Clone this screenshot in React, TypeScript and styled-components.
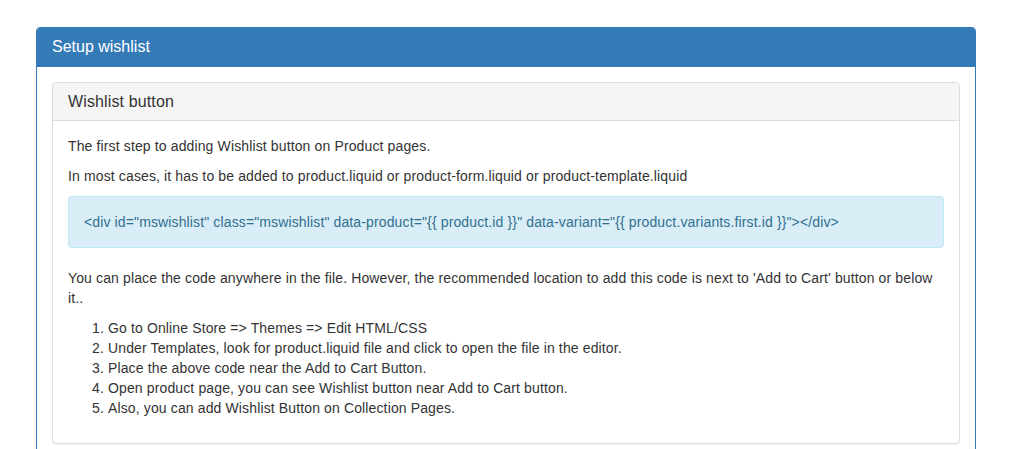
import React from 'react';
import styled, { createGlobalStyle } from 'styled-components';

const GlobalStyle = createGlobalStyle`
  * { box-sizing: border-box; }
  body {
    margin: 0;
    background: #fff;
    font-family: "Liberation Sans", Arial, Helvetica, sans-serif;
    font-size: 14px;
    line-height: 20px;
    color: #333;
  }
`;

const Page = styled.div`
  padding: 27px 0 0 36px;
`;

const Panel = styled.div<{ $variant: 'primary' | 'default' }>`
  width: ${({ $variant }) => ($variant === 'primary' ? '940px' : 'auto')};
  background: #fff;
  border: 1px solid ${({ $variant }) => ($variant === 'primary' ? '#337ab7' : '#ddd')};
  border-radius: 4px;
  margin-bottom: 20px;
  box-shadow: 0 1px 1px rgba(0, 0, 0, 0.05);
`;

const PanelHeading = styled.div<{ $variant: 'primary' | 'default' }>`
  padding: 10px 15px;
  border-bottom: 1px solid ${({ $variant }) => ($variant === 'primary' ? '#337ab7' : '#ddd')};
  border-top-left-radius: 3px;
  border-top-right-radius: 3px;
  background: ${({ $variant }) => ($variant === 'primary' ? '#337ab7' : '#f5f5f5')};
  color: ${({ $variant }) => ($variant === 'primary' ? '#fff' : '#333')};
`;

const PanelTitle = styled.h3`
  margin: 0;
  font-size: 16px;
  font-weight: 400;
  line-height: 1.1;
  color: inherit;
`;

// the 14px copy renders a little wider in the original (hinted advances)
const PanelBody = styled.div`
  padding: 15px;
  letter-spacing: 0.13px;
`;

const Text = styled.p`
  margin: 0 0 10px;
`;

const CodeAlert = styled.div`
  margin-bottom: 20px;
  padding: 15px;
  border: 1px solid #bce8f1;
  border-radius: 4px;
  background: #d9edf7;
  color: #31708f;
`;

const Steps = styled.ol`
  margin: 0 0 10px;
  padding-left: 40px;
`;

const steps = [
  'Go to Online Store => Themes => Edit HTML/CSS',
  'Under Templates, look for product.liquid file and click to open the file in the editor.',
  'Place the above code near the Add to Cart Button.',
  'Open product page, you can see Wishlist button near Add to Cart button.',
  'Also, you can add Wishlist Button on Collection Pages.',
];

export default function App() {
  return (
    <Page>
      <GlobalStyle />
      <Panel $variant="primary">
        <PanelHeading $variant="primary">
          <PanelTitle>Setup wishlist</PanelTitle>
        </PanelHeading>
        <PanelBody>
          <Panel $variant="default">
            <PanelHeading $variant="default">
              <PanelTitle>Wishlist button</PanelTitle>
            </PanelHeading>
            <PanelBody>
              <Text>The first step to adding Wishlist button on Product pages.</Text>
              <Text>In most cases, it has to be added to product.liquid or product-form.liquid or product-template.liquid</Text>
              <CodeAlert>
                {'<div id="mswishlist" class="mswishlist" data-product="{{ product.id }}" data-variant="{{ product.variants.first.id }}"></div>'}
              </CodeAlert>
              <Text>
                You can place the code anywhere in the file. However, the recommended location to add this code is next to 'Add to Cart' button or below it..
              </Text>
              <Steps>
                {steps.map((step, i) => (
                  <li key={i}>{step}</li>
                ))}
              </Steps>
            </PanelBody>
          </Panel>
        </PanelBody>
      </Panel>
    </Page>
  );
}
